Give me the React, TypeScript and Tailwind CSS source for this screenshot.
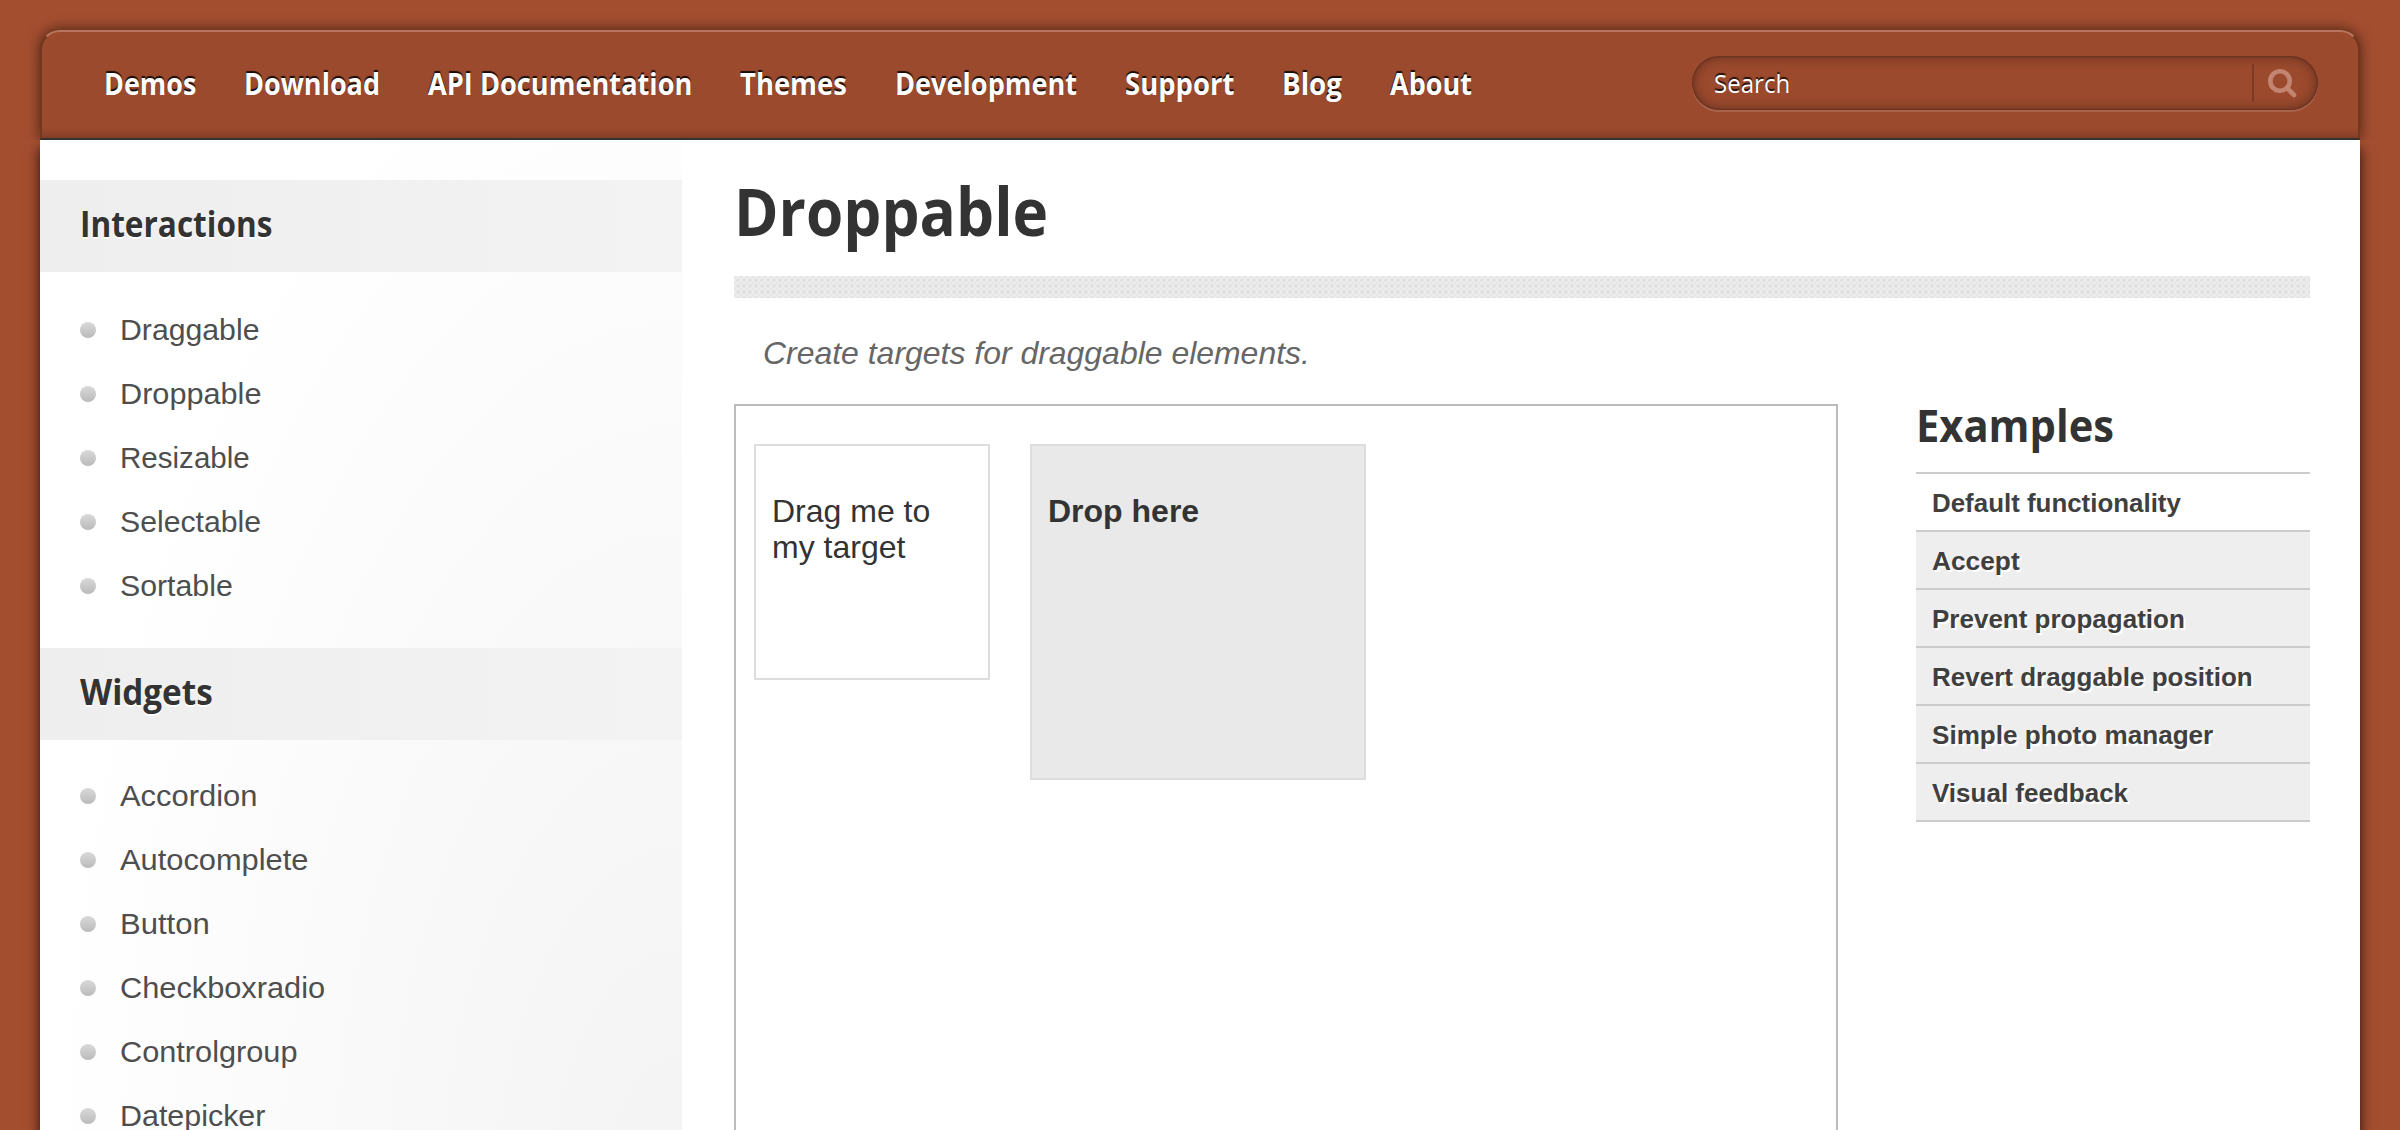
import { useLayoutEffect, useRef, useState } from "react";

const DISPLAY = "font-['Open_Sans','Noto_Sans',sans-serif]";
const BODY = "font-['Liberation_Sans',Arial,sans-serif]";

/** Text condensed or widened horizontally to an exact advance width. */
function Fit({ text, w, className = "" }: { text: string; w: number; className?: string }) {
  const ref = useRef<HTMLSpanElement>(null);
  const [scale, setScale] = useState(1);
  useLayoutEffect(() => {
    if (ref.current) setScale(w / ref.current.offsetWidth);
  }, [w, text]);
  return (
    <span className={"block whitespace-nowrap " + className} style={{ width: w }}>
      <span ref={ref} className="inline-block origin-left" style={{ transform: `scaleX(${scale})` }}>
        {text}
      </span>
    </span>
  );
}

const nav: [string, number][] = [
  ["Demos", 92],
  ["Download", 136],
  ["API Documentation", 264],
  ["Themes", 107],
  ["Development", 182],
  ["Support", 109],
  ["Blog", 60],
  ["About", 82],
];

const interactions: [string, number][] = [
  ["Draggable", 139],
  ["Droppable", 141],
  ["Resizable", 130],
  ["Selectable", 141],
  ["Sortable", 113],
];

const widgets: [string, number][] = [
  ["Accordion", 137],
  ["Autocomplete", 188],
  ["Button", 90],
  ["Checkboxradio", 205],
  ["Controlgroup", 177],
  ["Datepicker", 145],
];

const examples: [string, number][] = [
  ["Default functionality", 249],
  ["Accept", 88],
  ["Prevent propagation", 253],
  ["Revert draggable position", 321],
  ["Simple photo manager", 281],
  ["Visual feedback", 196],
];

function MenuHeading({ text, w }: { text: string; w: number }) {
  return (
    <div className="flex h-[92px] items-center bg-linear-to-r from-[#eeeeee] to-[#f3f3f3] pl-10">
      <h3 className={`${DISPLAY} pb-[5px] text-[35px] leading-[48px] font-[750] text-[#333] [text-shadow:0_2px_0_#fff]`}>
        <Fit text={text} w={w} />
      </h3>
    </div>
  );
}

function MenuList({ items }: { items: [string, number][] }) {
  return (
    <ul>
      {items.map(([label, w]) => (
        <li key={label} className="flex h-16 items-center gap-6 pl-10 text-[30px] text-[#4e4e4e]">
          <i className="size-4 shrink-0 rounded-full bg-linear-to-b from-[#dadada] to-[#bababa]" />
          <Fit text={label} w={w} className="leading-[34px]" />
        </li>
      ))}
    </ul>
  );
}

export default function App() {
  return (
    <div className={`${BODY} flex h-[1130px] flex-col overflow-hidden bg-[#a44e30] px-10 pt-[30px]`}>
      <header className="relative z-10 flex h-[110px] shrink-0 items-stretch rounded-t-[20px] border-x-2 border-t-2 border-b-2 border-x-[#71371f] border-t-[#b9765f] border-b-[#333] bg-[#9c4a2e] bg-[linear-gradient(to_top,rgba(0,0,0,0.16),transparent_10px)] pl-[62px] shadow-[0_-1px_14px_rgba(0,0,0,0.55)] [clip-path:inset(-30px_-30px_0_-30px)]">
        <nav className={`${DISPLAY} flex items-center gap-12 pb-1 text-[31px] leading-[42px] font-[750] text-white [text-shadow:0_-2px_1px_rgba(0,0,0,0.85)]`}>
          {nav.map(([label, w]) => (
            <a key={label}>
              <Fit text={label} w={w} />
            </a>
          ))}
        </nav>
        <div className="mt-6 mr-10 ml-auto flex h-[54px] w-[626px] items-center rounded-full pl-[22px] shadow-[inset_0_0_14px_rgba(0,0,0,0.4),inset_0_0_2px_1px_rgba(0,0,0,0.2),0_2px_0_rgba(255,255,255,0.14)]">
          <Fit
            text="Search"
            w={76}
            className={`${DISPLAY} pb-px text-[25px] leading-[34px] font-medium text-white [text-shadow:0_-2px_1px_rgba(0,0,0,0.8)]`}
          />
          <span className="ml-auto h-[38px] w-0.5 bg-[#7c3a24]" />
          <svg className="mr-[20px] ml-[12px]" width="32" height="32" viewBox="0 0 32 32" fill="none" stroke="#c18571">
            <circle cx="14" cy="14" r="9.7" strokeWidth="4.6" />
            <path d="M21 21l7 7" strokeWidth="4.6" strokeLinecap="round" />
          </svg>
        </div>
      </header>

      <div className="flex min-h-0 flex-1 items-stretch bg-white shadow-[0_8px_12px_rgba(0,0,0,0.8)]">
        <aside className="w-[642px] shrink-0 bg-[radial-gradient(ellipse_642px_1250px_at_100%_108%,#f3f3f3,#ffffff)] pt-10">
          <MenuHeading text="Interactions" w={192} />
          <div className="pt-[26px] pb-[30px]">
            <MenuList items={interactions} />
          </div>
          <MenuHeading text="Widgets" w={133} />
          <div className="pt-6">
            <MenuList items={widgets} />
          </div>
        </aside>

        <main className="flex min-w-0 flex-1 flex-col pr-[50px] pl-[52px]">
          <h1 className={`${DISPLAY} mt-[22px] h-[114px] text-[67px] leading-[96px] font-[750] text-[#333]`}>
            <Fit text="Droppable" w={314} />
          </h1>
          <div className="h-[22px] shrink-0 bg-[#ededed] bg-[radial-gradient(circle,#dedede_1px,transparent_2.2px),radial-gradient(circle,#e6e6e6_1px,transparent_2px)] bg-[size:6px_6px] bg-[position:1px_1px,4px_4px]" />
          <div className="mt-[33px] pl-[29px] text-[32px] leading-[44px] text-[#666] italic">
            <Fit text="Create targets for draggable elements." w={547} />
          </div>

          <div className="mt-[29px] flex min-h-0 flex-1 items-start justify-between">
            <section className="flex h-[800px] w-[1104px] shrink-0 items-start gap-10 border-2 border-[#bbb] pt-[38px] pl-[18px] text-[32px] leading-9 text-[#333]">
              <div className="size-[236px] border-2 border-[#ddd] px-4 pt-[47px]">
                <p>
                  Drag me to
                  <br />
                  my target
                </p>
              </div>
              <div className="size-[336px] border-2 border-[#ddd] bg-[#e9e9e9] px-4 pt-[47px]">
                <p className="font-bold">Drop here</p>
              </div>
            </section>

            <section className="w-[394px]">
              <h2 className={`${DISPLAY} h-[68px] text-[44px] leading-[42px] font-[750] text-[#333]`}>
                <Fit text="Examples" w={198} />
              </h2>
              <ul className="border-t-2 border-[#ccc] text-[26px] leading-[30px] font-bold text-[#3f3f3f]">
                {examples.map(([label, w], i) => (
                  <li
                    key={label}
                    className={`flex h-[58px] items-center border-b-2 border-[#ccc] pt-[2px] pl-4 [text-shadow:2px_2px_0_#fff] ${i ? "bg-[#eee]" : "bg-white"}`}
                  >
                    <Fit text={label} w={w} />
                  </li>
                ))}
              </ul>
            </section>
          </div>
        </main>
      </div>
    </div>
  );
}
